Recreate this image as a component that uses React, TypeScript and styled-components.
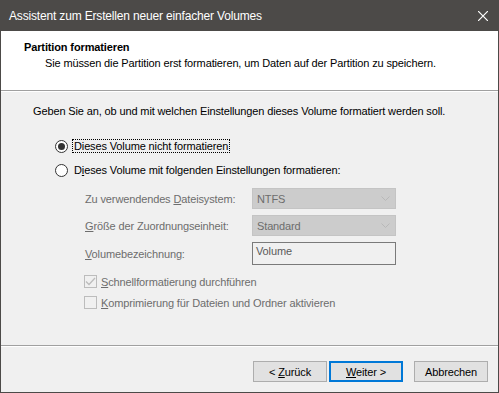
import React from "react";
import styled, { createGlobalStyle } from "styled-components";

const Global = createGlobalStyle`
  html, body { margin: 0; padding: 0; background: #f0f0f0; }
  * { box-sizing: border-box; }
`;

const Window = styled.div`
  width: 499px;
  height: 393px;
  display: flex;
  flex-direction: column;
  border: 1px solid #4c4a48;
  border-top: none;
  background: #f0f0f0;
  font-family: "Liberation Sans", Arial, sans-serif;
  font-size: 11px;
  letter-spacing: -0.13px;
  color: #000;
`;

const TitleBar = styled.div`
  height: 31px;
  margin: 0 -1px;
  background: #4c4a48;
  color: #fff;
  display: flex;
  align-items: center;
  justify-content: space-between;
  padding: 0 11px 0 9px;
  font-family: "Liberation Sans", Arial, sans-serif;
  font-size: 12px;
  letter-spacing: -0.17px;
`;

const Header = styled.div`
  height: 60px;
  background: #fff;
  border-bottom: 1px solid #a0a0a0;
  box-shadow: 0 1px 0 #fff;
  padding: 10px 0 0 23px;
`;

const HeaderTitle = styled.div`
  font-weight: bold;
  line-height: 13px;
`;

const HeaderSub = styled.div`
  margin-top: 3px;
  padding-left: 21px;
  line-height: 13px;
`;

const Body = styled.div`
  flex: 1;
  padding: 13px 0 0 32px;
  margin-top: 1px;
`;

const Intro = styled.div`
  line-height: 13px;
`;

const Options = styled.div`
  margin-top: 21px;
  padding-left: 22px;
  display: flex;
  flex-direction: column;
  gap: 10px;
`;

const RadioRow = styled.label`
  display: flex;
  align-items: center;
  gap: 6px;
  height: 14px;
`;

const RadioCircle = styled.span<{ $checked?: boolean }>`
  width: 13px;
  height: 13px;
  border-radius: 50%;
  border: 1px solid #333;
  background: #fff;
  display: flex;
  align-items: center;
  justify-content: center;
  &::after {
    content: "";
    width: 7px;
    height: 7px;
    border-radius: 50%;
    background: ${(p) => (p.$checked ? "#333" : "transparent")};
  }
`;

const RadioText = styled.span<{ $focus?: boolean }>`
  line-height: 12px;
  padding: 0 1px;
  margin-left: -1px;
  outline: ${(p) => (p.$focus ? "1px dotted #000" : "none")};
`;

const Settings = styled.div`
  margin-top: 11px;
  padding-left: 52px;
  display: grid;
  grid-template-columns: 167px 144px;
  row-gap: 6px;
  align-items: center;
`;

const FieldLabel = styled.div`
  color: #6d6d6d;
`;

const Combo = styled.div`
  height: 21px;
  background: #cccccc;
  border: 1px solid #c4c4c4;
  color: #6d6d6d;
  display: flex;
  align-items: center;
  justify-content: space-between;
  padding: 0 5px 0 4px;
`;

const TextBox = styled.div`
  height: 23px;
  border: 1px solid #7a7a7a;
  background: #f0f0f0;
  color: #5a5a5a;
  padding: 2px 0 0 3px;
`;

const Checks = styled.div`
  margin-top: 10px;
  padding-left: 51px;
  display: flex;
  flex-direction: column;
  gap: 8px;
`;

const CheckRow = styled.label`
  display: flex;
  align-items: center;
  gap: 4px;
  color: #6d6d6d;
`;

const CheckBox = styled.span`
  width: 13px;
  height: 13px;
  border: 1px solid #bcbcbc;
  background: #f0f0f0;
  display: flex;
  align-items: center;
  justify-content: center;
`;

const Footer = styled.div`
  height: 47px;
  border-top: 1px solid #a0a0a0;
  box-shadow: inset 0 1px 0 #fff;
  display: flex;
  justify-content: flex-end;
  align-items: flex-start;
  padding: 15px 10px 0 0;
`;

const Button = styled.button<{ $default?: boolean; $gap?: number }>`
  width: 74px;
  height: 21px;
  margin-left: ${(p) => p.$gap ?? 0}px;
  background: #e1e1e1;
  border: ${(p) => (p.$default ? "2px solid #0078d7" : "1px solid #adadad")};
  font-family: "Liberation Sans", Arial, sans-serif;
  font-size: 11px;
  letter-spacing: -0.13px;
  color: #000;
  padding: 0;
`;

const U = styled.span`
  text-decoration: underline;
`;

const Chevron = () => (
  <svg width="9" height="5" viewBox="0 0 9 5">
    <path d="M0.5 0.5 L4.5 4.5 L8.5 0.5" stroke="#b8b8b8" fill="none" strokeWidth="1" />
  </svg>
);

const CloseIcon = () => (
  <svg width="10" height="10" viewBox="0 0 10 10">
    <path d="M0 0 L10 10 M10 0 L0 10" stroke="#fff" strokeWidth="1.2" />
  </svg>
);

const Check = () => (
  <svg width="11" height="9" viewBox="0 0 11 9">
    <path d="M1 4.5 L4 7.5 L10 1" stroke="#bcbcbc" fill="none" strokeWidth="1.3" />
  </svg>
);

export default function App() {
  return (
    <>
      <Global />
      <Window>
        <TitleBar>
          <span>Assistent zum Erstellen neuer einfacher Volumes</span>
          <CloseIcon />
        </TitleBar>
        <Header>
          <HeaderTitle>Partition formatieren</HeaderTitle>
          <HeaderSub>
            Sie müssen die Partition erst formatieren, um Daten auf der Partition zu speichern.
          </HeaderSub>
        </Header>
        <Body>
          <Intro>
            Geben Sie an, ob und mit welchen Einstellungen dieses Volume formatiert werden soll.
          </Intro>
          <Options>
            <RadioRow>
              <RadioCircle $checked />
              <RadioText $focus>Dieses Volume nicht formatieren</RadioText>
            </RadioRow>
            <RadioRow>
              <RadioCircle />
              <RadioText>
                D<U>i</U>eses Volume mit folgenden Einstellungen formatieren:
              </RadioText>
            </RadioRow>
          </Options>
          <Settings>
            <FieldLabel>
              Zu verwendendes <U>D</U>ateisystem:
            </FieldLabel>
            <Combo>
              <span>NTFS</span>
              <Chevron />
            </Combo>
            <FieldLabel>
              <U>G</U>röße der Zuordnungseinheit:
            </FieldLabel>
            <Combo>
              <span>Standard</span>
              <Chevron />
            </Combo>
            <FieldLabel>
              <U>V</U>olumebezeichnung:
            </FieldLabel>
            <TextBox>Volume</TextBox>
          </Settings>
          <Checks>
            <CheckRow>
              <CheckBox>
                <Check />
              </CheckBox>
              <span>
                <U>S</U>chnellformatierung durchführen
              </span>
            </CheckRow>
            <CheckRow>
              <CheckBox />
              <span>
                <U>K</U>omprimierung für Dateien und Ordner aktivieren
              </span>
            </CheckRow>
          </Checks>
        </Body>
        <Footer>
          <Button>
            &lt; <U>Z</U>urück
          </Button>
          <Button $default $gap={2}>
            <U>W</U>eiter &gt;
          </Button>
          <Button $gap={11}>Abbrechen</Button>
        </Footer>
      </Window>
    </>
  );
}
